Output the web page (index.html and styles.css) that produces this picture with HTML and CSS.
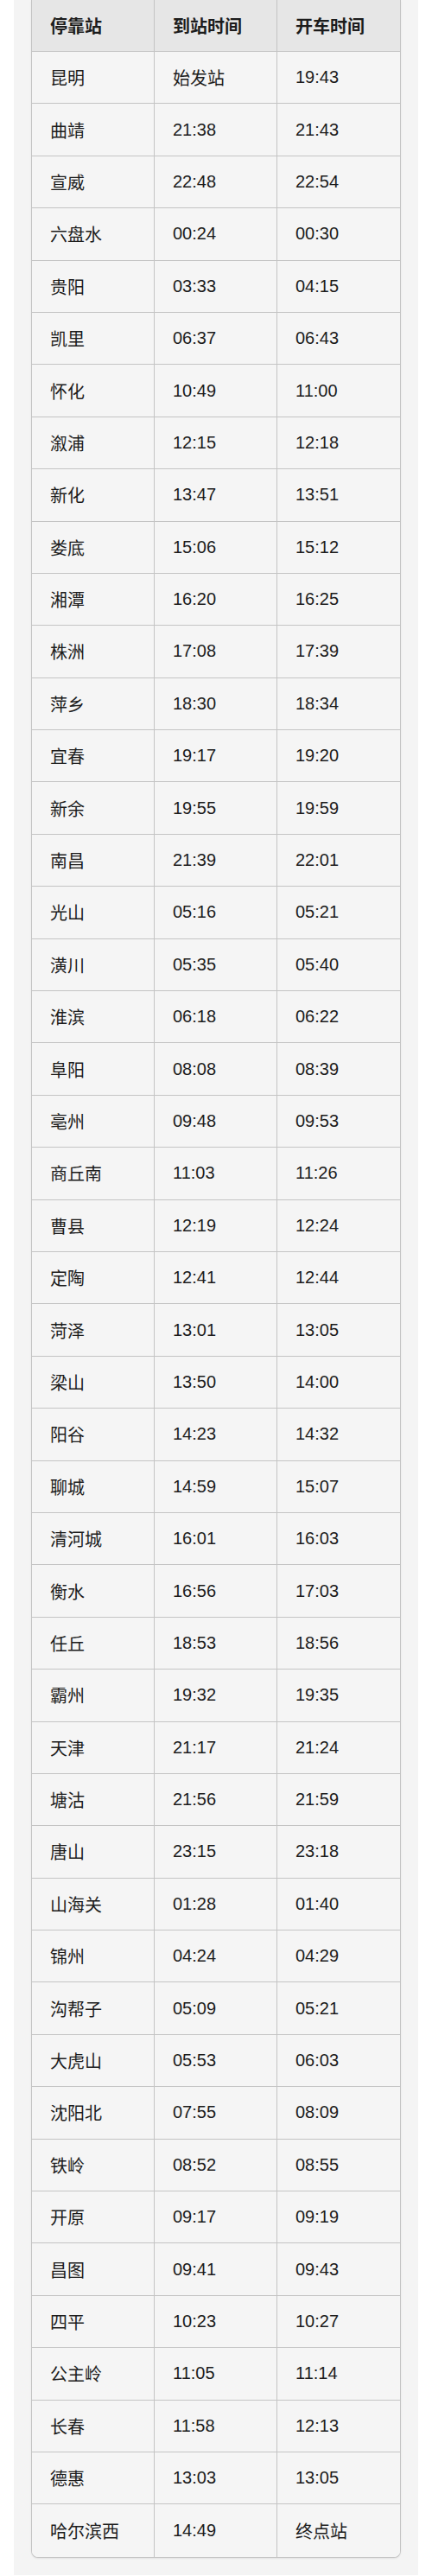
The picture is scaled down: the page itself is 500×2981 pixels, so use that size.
FILE: index.html
```html
<!DOCTYPE html>
<html lang="zh-CN">
<head>
<meta charset="utf-8">
<title>停靠站时刻表</title>
<link rel="stylesheet" href="styles.css">
</head>
<body>
<div class="page">
  <div class="panel">
    <div class="table-wrap">
      <table class="schedule">
        <thead>
          <tr><th>停靠站</th><th>到站时间</th><th>开车时间</th></tr>
        </thead>
        <tbody>
          <tr><td>昆明</td><td>始发站</td><td>19:43</td></tr>
          <tr><td>曲靖</td><td>21:38</td><td>21:43</td></tr>
          <tr><td>宣威</td><td>22:48</td><td>22:54</td></tr>
          <tr><td>六盘水</td><td>00:24</td><td>00:30</td></tr>
          <tr><td>贵阳</td><td>03:33</td><td>04:15</td></tr>
          <tr><td>凯里</td><td>06:37</td><td>06:43</td></tr>
          <tr><td>怀化</td><td>10:49</td><td>11:00</td></tr>
          <tr><td>溆浦</td><td>12:15</td><td>12:18</td></tr>
          <tr><td>新化</td><td>13:47</td><td>13:51</td></tr>
          <tr><td>娄底</td><td>15:06</td><td>15:12</td></tr>
          <tr><td>湘潭</td><td>16:20</td><td>16:25</td></tr>
          <tr><td>株洲</td><td>17:08</td><td>17:39</td></tr>
          <tr><td>萍乡</td><td>18:30</td><td>18:34</td></tr>
          <tr><td>宜春</td><td>19:17</td><td>19:20</td></tr>
          <tr><td>新余</td><td>19:55</td><td>19:59</td></tr>
          <tr><td>南昌</td><td>21:39</td><td>22:01</td></tr>
          <tr><td>光山</td><td>05:16</td><td>05:21</td></tr>
          <tr><td>潢川</td><td>05:35</td><td>05:40</td></tr>
          <tr><td>淮滨</td><td>06:18</td><td>06:22</td></tr>
          <tr><td>阜阳</td><td>08:08</td><td>08:39</td></tr>
          <tr><td>亳州</td><td>09:48</td><td>09:53</td></tr>
          <tr><td>商丘南</td><td>11:03</td><td>11:26</td></tr>
          <tr><td>曹县</td><td>12:19</td><td>12:24</td></tr>
          <tr><td>定陶</td><td>12:41</td><td>12:44</td></tr>
          <tr><td>菏泽</td><td>13:01</td><td>13:05</td></tr>
          <tr><td>梁山</td><td>13:50</td><td>14:00</td></tr>
          <tr><td>阳谷</td><td>14:23</td><td>14:32</td></tr>
          <tr><td>聊城</td><td>14:59</td><td>15:07</td></tr>
          <tr><td>清河城</td><td>16:01</td><td>16:03</td></tr>
          <tr><td>衡水</td><td>16:56</td><td>17:03</td></tr>
          <tr><td>任丘</td><td>18:53</td><td>18:56</td></tr>
          <tr><td>霸州</td><td>19:32</td><td>19:35</td></tr>
          <tr><td>天津</td><td>21:17</td><td>21:24</td></tr>
          <tr><td>塘沽</td><td>21:56</td><td>21:59</td></tr>
          <tr><td>唐山</td><td>23:15</td><td>23:18</td></tr>
          <tr><td>山海关</td><td>01:28</td><td>01:40</td></tr>
          <tr><td>锦州</td><td>04:24</td><td>04:29</td></tr>
          <tr><td>沟帮子</td><td>05:09</td><td>05:21</td></tr>
          <tr><td>大虎山</td><td>05:53</td><td>06:03</td></tr>
          <tr><td>沈阳北</td><td>07:55</td><td>08:09</td></tr>
          <tr><td>铁岭</td><td>08:52</td><td>08:55</td></tr>
          <tr><td>开原</td><td>09:17</td><td>09:19</td></tr>
          <tr><td>昌图</td><td>09:41</td><td>09:43</td></tr>
          <tr><td>四平</td><td>10:23</td><td>10:27</td></tr>
          <tr><td>公主岭</td><td>11:05</td><td>11:14</td></tr>
          <tr><td>长春</td><td>11:58</td><td>12:13</td></tr>
          <tr><td>德惠</td><td>13:03</td><td>13:05</td></tr>
          <tr><td>哈尔滨西</td><td>14:49</td><td>终点站</td></tr>
        </tbody>
      </table>
    </div>
  </div>
</div>
</body>
</html>
```

FILE: styles.css
```css
html, body {
  margin: 0;
  padding: 0;
  background: #ffffff;
}

.page {
  padding: 0 16px 3px;
}

.panel {
  background: #f4f4f4;
  padding: 0 20px 20px;
}

.table-wrap {
  border: 1px solid #c4c4c4;
  border-top: none;
  border-radius: 0 0 8px 8px;
  overflow: hidden;
  box-shadow: 0 1px 2px rgba(0, 0, 0, 0.08);
  background: #f5f5f5;
}

.schedule {
  width: 100%;
  border-collapse: separate;
  border-spacing: 0;
  table-layout: fixed;
  font-family: "Liberation Sans", "Noto Sans CJK SC", sans-serif;
  font-size: 20px;
  color: #1c1c1c;
}

.schedule th,
.schedule td {
  box-sizing: border-box;
  text-align: left;
  vertical-align: middle;
  padding: 0 0 0 21px;
  border-right: 1px solid #c4c4c4;
  border-bottom: 1px solid #c4c4c4;
  white-space: nowrap;
}

.schedule th:last-child,
.schedule td:last-child {
  border-right: none;
}

.schedule tbody tr:last-child td {
  border-bottom: none;
}

.schedule thead tr {
  height: 60px;
}

.schedule th {
  background: #e6e6e6;
  font-weight: 700;
}

.schedule tbody tr {
  height: 60.4px;
}

.schedule td {
  background: #f5f5f5;
  font-weight: 400;
}
```
